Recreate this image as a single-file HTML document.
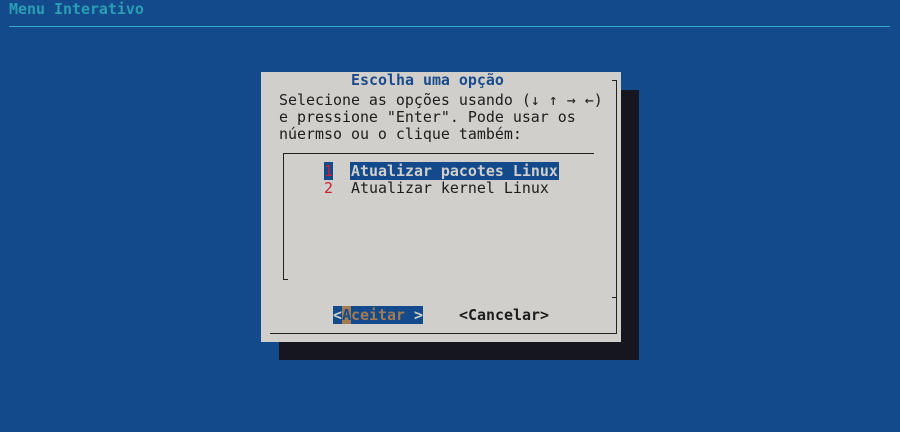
<!DOCTYPE html>
<html><head><meta charset="utf-8"><style>
body{margin:0;width:900px;height:432px;background:#134a8b;position:relative;overflow:hidden;font-family:"DejaVu Sans Mono","Liberation Mono",monospace;font-size:14.95px}
.t{position:absolute;white-space:pre;line-height:17px;height:17px}
.b{font-weight:bold}
.d{position:absolute}
</style></head><body>
<div class="t b" style="left:9px;top:1px;color:#2a9fb4">Menu Interativo</div>
<div class="d" style="left:9px;top:26px;width:881px;height:1px;background:#3aa6c8"></div>
<div class="d" style="left:279px;top:90px;width:360px;height:270px;background:#15161f"></div>
<div class="d" style="left:261px;top:72px;width:360px;height:270px;background:#d0cfcb"></div>
<div class="t b" style="left:351px;top:72px;color:#1a4b8c">Escolha uma opção</div>
<div class="t" style="left:279px;top:92px;color:#1d1d1d">Selecione as opções usando (↓ ↑ → ←)</div>
<div class="t" style="left:279px;top:109px;color:#1d1d1d">e pressione "Enter". Pode usar os</div>
<div class="t" style="left:279px;top:126px;color:#1d1d1d">núermso ou o clique também:</div>
<div class="d" style="left:283px;top:153px;width:311px;height:1px;background:#222"></div>
<div class="d" style="left:283px;top:153px;width:1px;height:126px;background:#222"></div>
<div class="d" style="left:283px;top:279px;width:5px;height:1px;background:#222"></div>
<div class="d" style="left:612px;top:80px;width:5px;height:1px;background:#222"></div>
<div class="d" style="left:616px;top:80px;width:1px;height:254px;background:#222"></div>
<div class="d" style="left:612px;top:297px;width:5px;height:1px;background:#222"></div>
<div class="d" style="left:270px;top:333px;width:347px;height:1px;background:#222"></div>
<div class="d" style="left:324px;top:162px;width:9px;height:18px;background:#134a8b"></div>
<div class="t" style="left:324px;top:163px;color:#d0222a">1</div>
<div class="d" style="left:350px;top:162px;width:209px;height:18px;background:#134a8b"></div>
<div class="t b" style="left:351px;top:163px;color:#d0cfcb">Atualizar pacotes Linux</div>
<div class="t" style="left:324px;top:180px;color:#c8202a">2</div>
<div class="t" style="left:351px;top:180px;color:#1d1d1d">Atualizar kernel Linux</div>
<div class="d" style="left:333px;top:306px;width:90px;height:18px;background:#134a8b"></div>
<div class="d" style="left:342px;top:306px;width:9px;height:18px;background:#a57a52"></div>
<div class="t b" style="left:333px;top:307px;color:#d0cfcb">&lt;<span style="color:#134a8b">A</span><span style="color:#a57a52">ceitar</span> &gt;</div>
<div class="t b" style="left:459px;top:307px;color:#1d1d1d">&lt;Cancelar&gt;</div>
</body></html>
